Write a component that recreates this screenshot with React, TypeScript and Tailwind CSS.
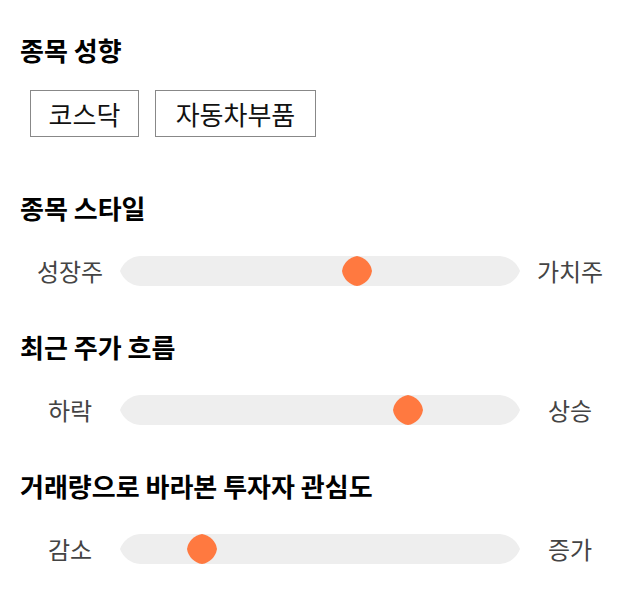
import React from 'react';

const font = { fontFamily: '"Noto Sans CJK KR", "Noto Sans", sans-serif' };

const Track: React.FC<{ value: number }> = ({ value }) => {
  // value: thumb center as fraction of the 400px track
  const cx = value * 400;
  return (
    <div className="h-[30px] w-[400px]">
      <svg width="400" height="30" viewBox="0 0 400 30" className="block">
        <path
          d="M20 0 H380 A23 23 0 0 1 400 15 A23 23 0 0 1 380 30 H20 A23 23 0 0 1 0 15 A23 23 0 0 1 20 0 Z"
          fill="#eeeeee"
        />
        <path
          d={`M${cx} 0 A18 18 0 0 1 ${cx + 15} 15 A18 18 0 0 1 ${cx} 30 A18 18 0 0 1 ${cx - 15} 15 A18 18 0 0 1 ${cx} 0 Z`}
          fill="#ff7940"
        />
      </svg>
    </div>
  );
};

const SliderRow: React.FC<{ left: string; right: string; value: number }> = ({ left, right, value }) => (
  <div className="flex items-center">
    <div className="w-[100px] text-center text-[24px] leading-[30px] text-[#444]">{left}</div>
    <Track value={value} />
    <div className="w-[100px] text-center text-[24px] leading-[30px] text-[#444]">{right}</div>
  </div>
);

export default function App() {
  return (
    <div className="min-h-screen bg-white px-5 pt-[33px]" style={font}>
      {/* 종목 성향 */}
      <h2 className="text-[26px] font-bold leading-[34px] text-black">종목 성향</h2>
      <div className="mt-[23px] flex gap-4 pl-[10px]">
        <span className="w-[109px] border border-[#888] text-center text-[26px] leading-[45px] text-[#111]">코스닥</span>
        <span className="w-[161px] border border-[#888] text-center text-[26px] leading-[45px] text-[#111]">자동차부품</span>
      </div>

      {/* 종목 스타일 */}
      <h2 className="mt-[54px] text-[26px] font-bold leading-[34px] text-black">종목 스타일</h2>
      <div className="mt-[31px]">
        <SliderRow left="성장주" right="가치주" value={0.5925} />
      </div>

      {/* 최근 주가 흐름 */}
      <h2 className="mt-[44px] text-[26px] font-bold leading-[34px] text-black">최근 주가 흐름</h2>
      <div className="mt-[31px]">
        <SliderRow left="하락" right="상승" value={0.72} />
      </div>

      {/* 거래량 */}
      <h2 className="mt-[44px] text-[26px] font-bold leading-[34px] text-black">거래량으로 바라본 투자자 관심도</h2>
      <div className="mt-[31px]">
        <SliderRow left="감소" right="증가" value={0.205} />
      </div>
    </div>
  );
}
